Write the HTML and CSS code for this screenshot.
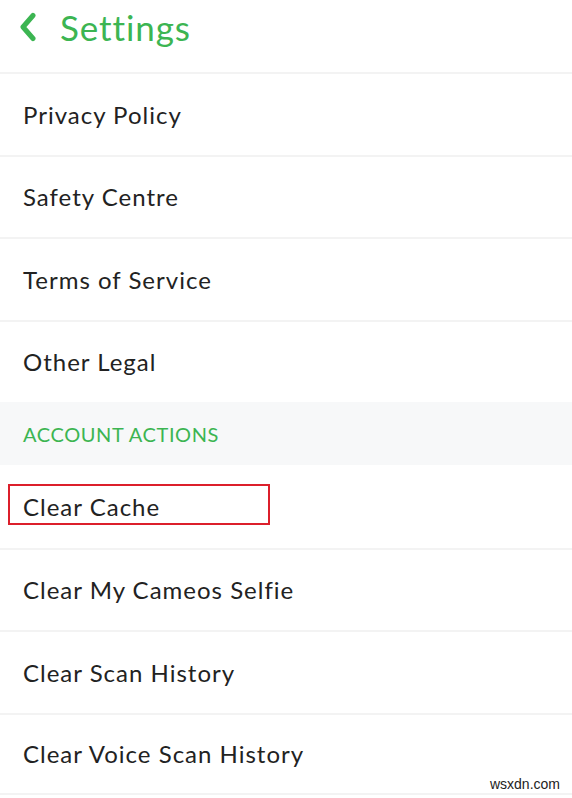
FILE: index.html
```html
<!DOCTYPE html>
<html>
<head>
<meta charset="utf-8">
<link rel="stylesheet" href="styles.css">
</head>
<body>
<div class="screen">
  <header class="topbar">
    <svg class="back" width="20" height="30" viewBox="0 0 20 30"><path d="M15 3.5 L5 15 L15 26.5" fill="none" stroke="#3cb552" stroke-width="5" stroke-linecap="round" stroke-linejoin="round"/></svg>
    <span class="title">Settings</span>
  </header>
  <div class="row"><span class="label">Privacy Policy</span></div>
  <div class="row"><span class="label">Safety Centre</span></div>
  <div class="row"><span class="label">Terms of Service</span></div>
  <div class="row"><span class="label">Other Legal</span></div>
  <div class="section">ACCOUNT ACTIONS</div>
  <div class="row first"><span class="label highlight">Clear Cache</span></div>
  <div class="row"><span class="label">Clear My Cameos Selfie</span></div>
  <div class="row"><span class="label">Clear Scan History</span></div>
  <div class="row last"><span class="label">Clear Voice Scan History</span><span class="watermark">wsxdn.com</span></div>
</div>
</body>
</html>
```
FILE: styles.css
```css
html, body {
  margin: 0;
  padding: 0;
  background: #ffffff;
}
.screen {
  width: 572px;
  height: 798px;
  overflow: hidden;
  font-family: Lato, "Open Sans", sans-serif;
  color: #222222;
}
.topbar {
  height: 72px;
  box-sizing: border-box;
  display: flex;
  align-items: center;
  padding: 0 0 18px 18px;
  gap: 22px;
}
.back {
  flex: none;
}
.title {
  font-size: 35px;
  color: #3cb552;
  letter-spacing: 0.9px;
}
.row {
  height: 82.5px;
  box-sizing: border-box;
  border-top: 2px solid #f3f3f3;
  display: flex;
  align-items: center;
  padding-left: 23px;
  position: relative;
}
.row.first {
  border-top: none;
}
.row.last {
  border-bottom: 2px solid #f3f3f3;
}
.label {
  font-size: 24px;
  letter-spacing: 1px;
}
.highlight {
  position: relative;
}
.highlight::after {
  content: "";
  position: absolute;
  left: -15px;
  top: -8px;
  width: 262px;
  height: 41px;
  box-sizing: border-box;
  border: 2px solid #dc1f2b;
}
.section {
  height: 63px;
  box-sizing: border-box;
  background: #f7f8f9;
  display: flex;
  align-items: center;
  padding-left: 23px;
  font-size: 20px;
  color: #3cb552;
  letter-spacing: 0.6px;
}
.watermark {
  position: absolute;
  right: 12px;
  bottom: 1px;
  font-family: "Liberation Sans", Arial, sans-serif;
  font-size: 14px;
  letter-spacing: 0;
  color: #222222;
}
```
